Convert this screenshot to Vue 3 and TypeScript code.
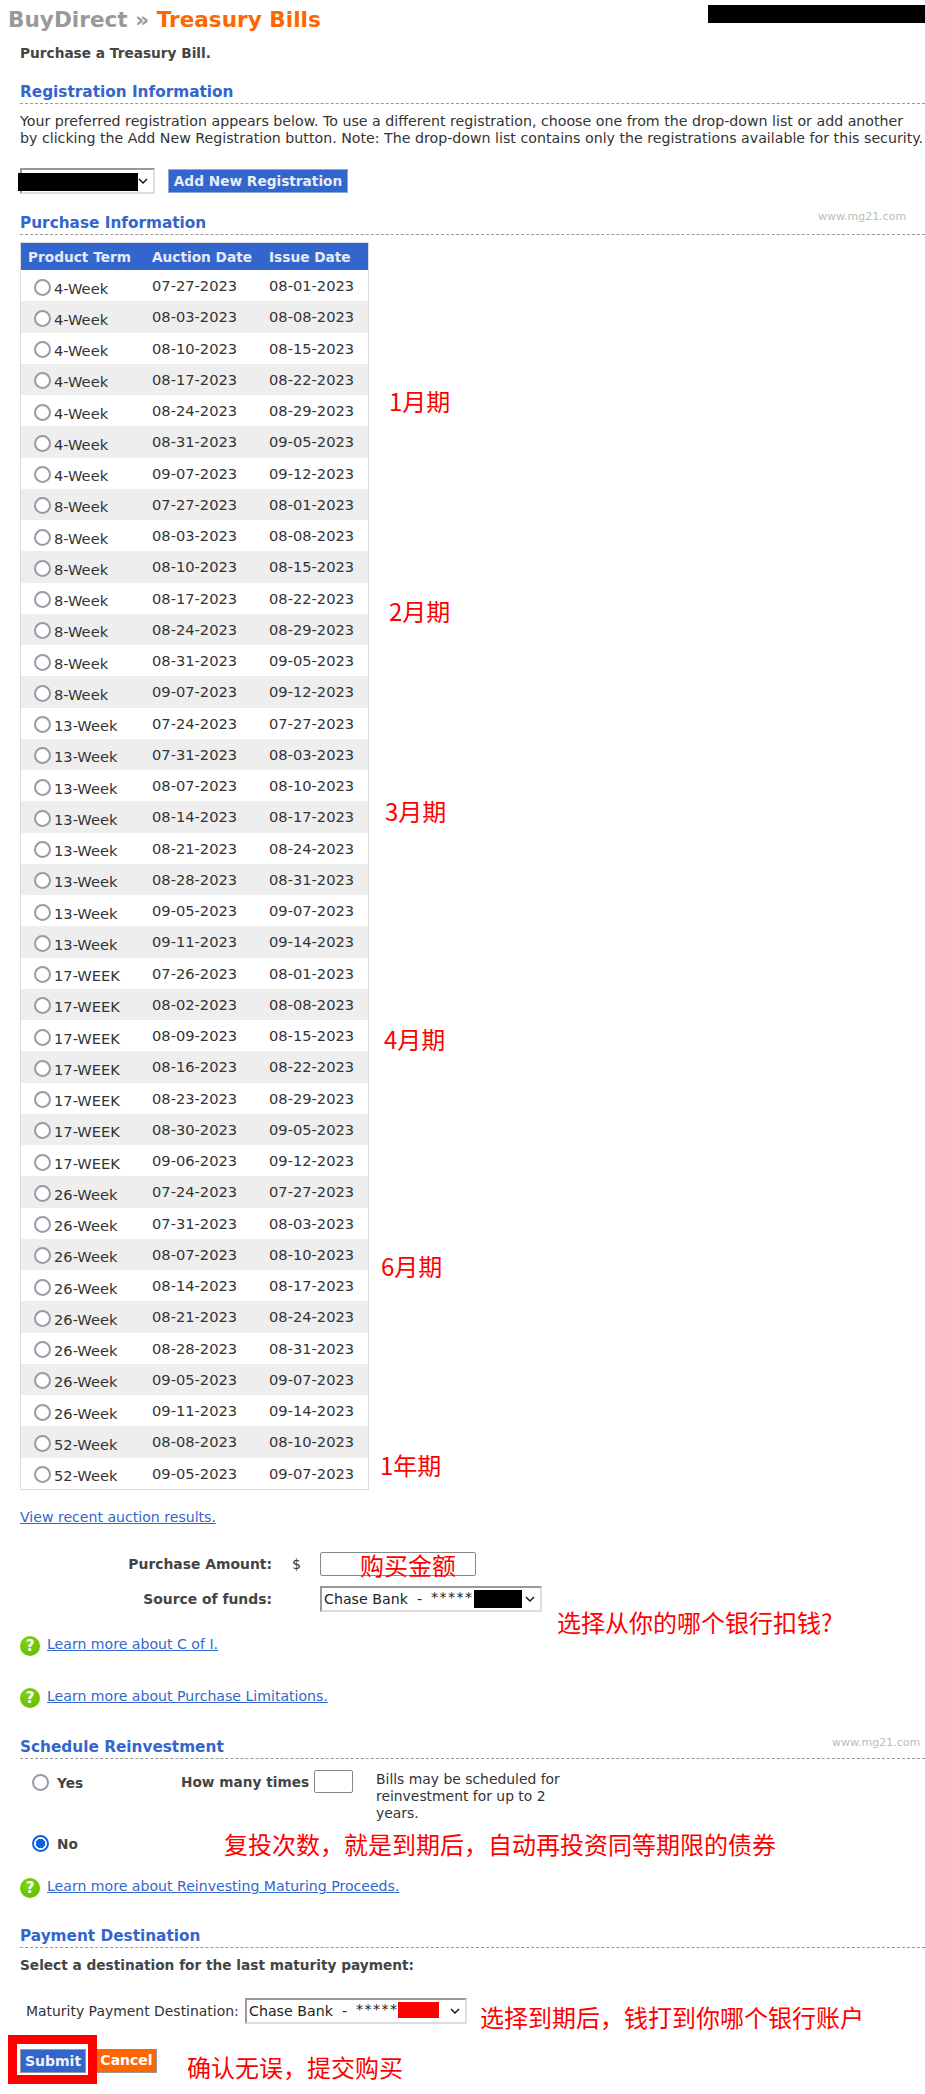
<script setup lang="ts">
interface Row { term: string; auction: string; issue: string }
const raw: [string, [string, string][]][] = [
  ['4-Week', [['07-27-2023','08-01-2023'],['08-03-2023','08-08-2023'],['08-10-2023','08-15-2023'],['08-17-2023','08-22-2023'],['08-24-2023','08-29-2023'],['08-31-2023','09-05-2023'],['09-07-2023','09-12-2023']]],
  ['8-Week', [['07-27-2023','08-01-2023'],['08-03-2023','08-08-2023'],['08-10-2023','08-15-2023'],['08-17-2023','08-22-2023'],['08-24-2023','08-29-2023'],['08-31-2023','09-05-2023'],['09-07-2023','09-12-2023']]],
  ['13-Week', [['07-24-2023','07-27-2023'],['07-31-2023','08-03-2023'],['08-07-2023','08-10-2023'],['08-14-2023','08-17-2023'],['08-21-2023','08-24-2023'],['08-28-2023','08-31-2023'],['09-05-2023','09-07-2023'],['09-11-2023','09-14-2023']]],
  ['17-WEEK', [['07-26-2023','08-01-2023'],['08-02-2023','08-08-2023'],['08-09-2023','08-15-2023'],['08-16-2023','08-22-2023'],['08-23-2023','08-29-2023'],['08-30-2023','09-05-2023'],['09-06-2023','09-12-2023']]],
  ['26-Week', [['07-24-2023','07-27-2023'],['07-31-2023','08-03-2023'],['08-07-2023','08-10-2023'],['08-14-2023','08-17-2023'],['08-21-2023','08-24-2023'],['08-28-2023','08-31-2023'],['09-05-2023','09-07-2023'],['09-11-2023','09-14-2023']]],
  ['52-Week', [['08-08-2023','08-10-2023'],['09-05-2023','09-07-2023']]],
]
const rows: Row[] = raw.flatMap(([term, ds]) => ds.map(([auction, issue]) => ({ term, auction, issue })))
const termNotes = [
  { text: '1月期', cls: 'n1' },
  { text: '2月期', cls: 'n2' },
  { text: '3月期', cls: 'n3' },
  { text: '4月期', cls: 'n4' },
  { text: '6月期', cls: 'n5' },
  { text: '1年期', cls: 'n6' },
]
</script>

<template>
  <div class="page">
    <header class="top">
      <h1 class="title"><span class="crumb">BuyDirect » </span><span class="cur">Treasury Bills</span></h1>
      <div class="redact top-redact"></div>
    </header>

    <main class="body">
      <p class="lead">Purchase a Treasury Bill.</p>

      <h2 class="sec sec-reg">Registration Information</h2>
      <p class="para">Your preferred registration appears below. To use a different registration, choose one from the drop-down list or add another by clicking the Add New Registration button. Note: The drop-down list contains only the registrations available for this security.</p>

      <div class="reg-row">
        <div class="sel sel-reg">
          <div class="redact reg-redact"></div>
          <svg class="chev" viewBox="0 0 10 6"><path d="M1 1l4 4 4-4" /></svg>
        </div>
        <button class="btn btn-blue btn-add" type="button">Add New Registration</button>
      </div>

      <div class="mark mark-a">www.mg21.com</div>
      <h2 class="sec sec-pur">Purchase Information</h2>

      <table class="grid">
        <thead>
          <tr><th class="c1">Product Term</th><th class="c2">Auction Date</th><th class="c3">Issue Date</th></tr>
        </thead>
        <tbody>
          <tr v-for="(r, i) in rows" :key="i" :class="{ alt: i % 2 === 1 }">
            <td class="c1"><div class="term"><span class="radio"></span><span class="term-t">{{ r.term }}</span></div></td>
            <td class="c2"><span class="date">{{ r.auction }}</span></td>
            <td class="c3"><span class="date">{{ r.issue }}</span></td>
          </tr>
        </tbody>
      </table>

      <a class="link recent" href="#">View recent auction results.</a>

      <div class="form-row amount">
        <label class="flabel">Purchase Amount:</label>
        <span class="dollar">$</span>
        <div class="input amt-input"></div>
      </div>
      <div class="form-row funds">
        <label class="flabel">Source of funds:</label>
        <div class="sel sel-bank">
          <span class="bank">Chase Bank&nbsp; -&nbsp; <span class="stars">*****</span></span>
          <div class="redact bank-redact"></div>
          <svg class="chev" viewBox="0 0 10 6"><path d="M1 1l4 4 4-4" /></svg>
        </div>
      </div>

      <div class="help h1"><span class="q">?</span><a class="link" href="#">Learn more about C of I.</a></div>
      <div class="help h2"><span class="q">?</span><a class="link" href="#">Learn more about Purchase Limitations.</a></div>

      <div class="mark mark-b">www.mg21.com</div>
      <h2 class="sec sec-sch">Schedule Reinvestment</h2>

      <div class="reinvest">
        <span class="radio rad-y"></span>
        <b class="yn yes">Yes</b>
        <b class="times">How many times</b>
        <div class="input times-input"></div>
        <p class="note">Bills may be scheduled for reinvestment for up to 2 years.</p>
      </div>
      <div class="no-row">
        <span class="radio on rad-y"></span>
        <b class="yn">No</b>
      </div>

      <div class="help h3"><span class="q">?</span><a class="link" href="#">Learn more about Reinvesting Maturing Proceeds.</a></div>

      <h2 class="sec sec-pay">Payment Destination</h2>
      <p class="lead dest">Select a destination for the last maturity payment:</p>

      <div class="mat-row">
        <span class="mat-label">Maturity Payment Destination:</span>
        <div class="sel sel-bank sel-mat">
          <span class="bank">Chase Bank&nbsp; -&nbsp; <span class="stars">*****</span></span>
          <div class="red-block"></div>
          <svg class="chev" viewBox="0 0 10 6"><path d="M1 1l4 4 4-4" /></svg>
        </div>
      </div>

      <div class="actions">
        <div class="submit-box"><button class="btn btn-blue btn-submit" type="button">Submit</button></div>
        <button class="btn btn-cancel" type="button">Cancel</button>
      </div>
    </main>

    <span v-for="n in termNotes" :key="n.cls" class="note-red" :class="n.cls">{{ n.text }}</span>
    <span class="note-red a1">购买金额</span>
    <span class="note-red a2">选择从你的哪个银行扣钱?</span>
    <span class="note-red a3">复投次数，就是到期后，自动再投资同等期限的债券</span>
    <span class="note-red a4">选择到期后，钱打到你哪个银行账户</span>
    <span class="note-red a5">确认无误，提交购买</span>
  </div>
</template>

<style>
html, body { margin: 0; background: #fff; }
</style>

<style scoped>
.page {
  position: relative;
  width: 925px;
  height: 2094px;
  overflow: hidden;
  background: #fff;
  color: #333;
  font-family: "DejaVu Sans", Verdana, sans-serif;
  font-size: 14.65px;
}
.top { display: flex; justify-content: space-between; height: 38px; }
.title { margin: 8px 0 0 8px; font-size: 21.6px; line-height: 24px; font-weight: bold; white-space: nowrap; }
.crumb { color: #999; }
.cur { color: #f60; }
.redact { background: #000; }
.top-redact { width: 217px; height: 18px; margin-top: 5px; }
.body { padding-left: 20px; }
.lead { margin: 6px 0 0; font-size: 13.7px; line-height: 18px; font-weight: bold; color: #444; }
.sec {
  margin: 0;
  font-size: 15.3px;
  line-height: 20px;
  font-weight: bold;
  color: #36c;
  padding-bottom: 1px;
  border-bottom: 1px dashed #999;
}
.sec-reg { margin-top: 20px; }
.para { margin: 9px 0 0; font-size: 14.2px; line-height: 17px; width: 905px; }
.reg-row { display: flex; align-items: center; gap: 13px; margin-top: 21px; height: 26px; }
.sel {
  position: relative;
  box-sizing: border-box;
  display: flex;
  align-items: center;
  height: 26px;
  background: #fff;
  border: 2px solid #ddd;
  border-top-color: #999;
  border-left-color: #999;
}
.sel-reg { width: 135px; }
.reg-redact { position: absolute; left: -4px; top: 3px; width: 120px; height: 18px; }
.chev { position: absolute; right: 5px; top: 50%; width: 10px; height: 6px; margin-top: -3px; fill: none; stroke: #111; stroke-width: 1.4; }
.btn {
  box-sizing: border-box;
  margin: 0;
  padding: 0;
  border: 1px solid #8ea6d8;
  font-family: inherit;
  font-weight: bold;
  color: #fff;
  white-space: nowrap;
}
.btn-blue { background: #36c; }
.btn-add { width: 180px; height: 24px; font-size: 13.7px; color: #e8edf8; }
.mark { font-size: 11px; color: #bbb; position: absolute; }
.mark-a { left: 818px; top: 210px; }
.mark-b { left: 832px; top: 1736px; }
.sec-pur { margin-top: 19px; }
.grid {
  margin-top: 7px;
  width: 349px;
  border-collapse: collapse;
  table-layout: fixed;
  border: 1px solid #ddd;
}
.grid th {
  height: 27px;
  padding: 0;
  background: #36c;
  color: #e6ebf7;
  font-size: 13.7px;
  line-height: 16px;
  text-align: left;
  white-space: nowrap;
}
.grid td { height: 31.25px; padding: 0; white-space: nowrap; }
.grid .alt td { background: #eee; }
.c1 { width: 124px; }
.c2 { width: 117px; }
th.c1 { padding-left: 7px !important; }
.term { display: flex; align-items: center; padding: 3px 0 0 13px; }
.term-t { margin-left: 3px; margin-top: 3px; line-height: 16px; }
.radio {
  box-sizing: border-box;
  display: inline-block;
  flex: none;
  width: 17px;
  height: 17px;
  border: 2px solid #9999a8;
  border-radius: 50%;
  background: #fff;
}
.radio.on { border-color: #0f62e6; background: radial-gradient(circle, #0f62e6 0 4.5px, #fff 5px); }
.link { color: #36c; text-decoration: underline; font-size: 14.1px; line-height: 18px; }
.recent { display: block; width: max-content; margin-top: 18px; }
.form-row { display: flex; align-items: center; }
.amount { margin-top: 26px; height: 24px; }
.funds { margin-top: 10px; height: 26px; }
.flabel { box-sizing: border-box; width: 252px; text-align: right; font-weight: bold; font-size: 13.9px; color: #444; }
.dollar { margin-left: 20px; width: 28px; font-size: 14px; }
.input { box-sizing: border-box; background: #fff; border: 1px solid #888; border-radius: 2px; }
.amt-input { width: 156px; height: 24px; }
.funds .sel { margin-left: 48px; }
.sel-bank { width: 222px; padding-left: 2px; }
.bank { font-size: 14.2px; white-space: pre; color: #222; }
.stars { letter-spacing: 1.4px; position: relative; top: -2px; }
.bank-redact { position: absolute; left: 152px; top: 2px; width: 48px; height: 18px; }
.help { display: flex; align-items: flex-start; gap: 7px; height: 20px; }
.help .link { margin-top: -1px; }
.q {
  flex: none;
  width: 20px;
  height: 20px;
  border-radius: 50%;
  background: radial-gradient(circle at 40% 30%, #7fd40a, #5fb800);
  color: #fff;
  font-weight: bold;
  font-size: 15px;
  line-height: 20px;
  text-align: center;
}
.h1 { margin-top: 24px; }
.h2 { margin-top: 32px; }
.sec-sch { margin-top: 29px; }
.reinvest { display: flex; align-items: flex-start; margin-top: 11px; height: 59px; }
.rad-y { margin: 4px 0 0 12px; }
.yn { margin: 5px 0 0 8px; font-size: 13.7px; color: #444; }
.yes { width: 124px; }
.times { margin-top: 4px; width: 133px; font-size: 13.7px; color: #444; white-space: nowrap; }
.times-input { width: 39px; height: 23px; flex: none; }
.note { margin: 1px 0 0 23px; width: 200px; font-size: 13.9px; line-height: 17px; }
.no-row { display: flex; align-items: flex-start; margin-top: 2px; height: 24px; }
.h3 { margin-top: 23px; }
.sec-pay { margin-top: 28px; }
.dest { margin-top: 8px; }
.mat-row { display: flex; align-items: center; margin-top: 24px; height: 26px; }
.mat-label { margin-left: 6px; width: 219px; font-size: 13.95px; white-space: nowrap; }
.sel-mat { position: relative; }
.red-block { position: absolute; left: 151px; top: 2px; width: 41px; height: 16px; background: #f00; }
.actions { display: flex; align-items: flex-start; margin: 11px 0 0 -12px; }
.submit-box {
  box-sizing: border-box;
  width: 89px;
  height: 49px;
  border: 9px solid #f00;
  background: #fff;
  padding: 5px 0 0 3px;
}
.btn-submit { width: 66px; height: 24px; font-size: 14px; display: block; color: #f0f3fb; border-color: #999; }
.btn-cancel { width: 60px; height: 24px; margin-top: 14px; background: #f60; border: none; border-right: 1px solid #999; border-bottom: 1px solid #999; font-size: 14px; }
.note-red {
  position: absolute;
  color: #f00;
  font-family: "Noto Sans CJK SC", sans-serif;
  font-size: 24px;
  line-height: 30px;
  white-space: nowrap;
}
.n1 { left: 389px; top: 386px; }
.n2 { left: 389px; top: 596px; }
.n3 { left: 385px; top: 796px; }
.n4 { left: 384px; top: 1024px; }
.n5 { left: 381px; top: 1251px; }
.n6 { left: 380px; top: 1450px; }
.a1 { left: 360px; top: 1550px; }
.a2 { left: 557px; top: 1607px; }
.a3 { left: 224px; top: 1829px; }
.a4 { left: 480px; top: 2002px; }
.a5 { left: 187px; top: 2052px; }
</style>
